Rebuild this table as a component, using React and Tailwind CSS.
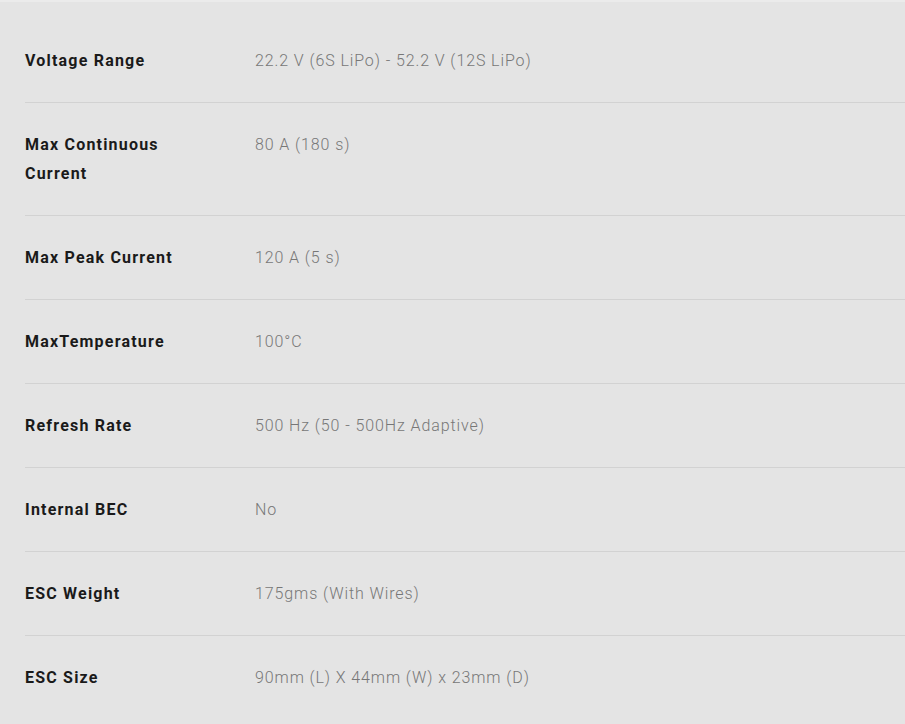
const specs = [
  { label: "Voltage Range", value: "22.2 V (6S LiPo) - 52.2 V (12S LiPo)" },
  { label: "Max Continuous Current", value: "80 A (180 s)" },
  { label: "Max Peak Current", value: "120 A (5 s)" },
  { label: "MaxTemperature", value: "100°C" },
  { label: "Refresh Rate", value: "500 Hz (50 - 500Hz Adaptive)" },
  { label: "Internal BEC", value: "No" },
  { label: "ESC Weight", value: "175gms (With Wires)" },
  { label: "ESC Size", value: "90mm (L) X 44mm (W) x 23mm (D)" },
];

export default function App() {
  return (
    <div className="min-h-screen bg-[#e4e4e4] border-t-2 border-[#ebebeb] font-['Roboto',sans-serif]">
      <div className="pl-[25px] pt-[17px]">
        {specs.map((s, i) => (
          <div
            key={s.label}
            className={`flex py-[27px] leading-[29px] ${
              i < specs.length - 1 ? "border-b border-[#d2d2d2]" : ""
            }`}
          >
            <div className="w-[230px] shrink-0 pr-[40px] text-[16px] font-bold text-[#1a1a1a] tracking-[1.2px]">
              {s.label}
            </div>
            <div className="text-[16px] font-light text-[#777777] tracking-[0.9px]">
              {s.value}
            </div>
          </div>
        ))}
      </div>
    </div>
  );
}
